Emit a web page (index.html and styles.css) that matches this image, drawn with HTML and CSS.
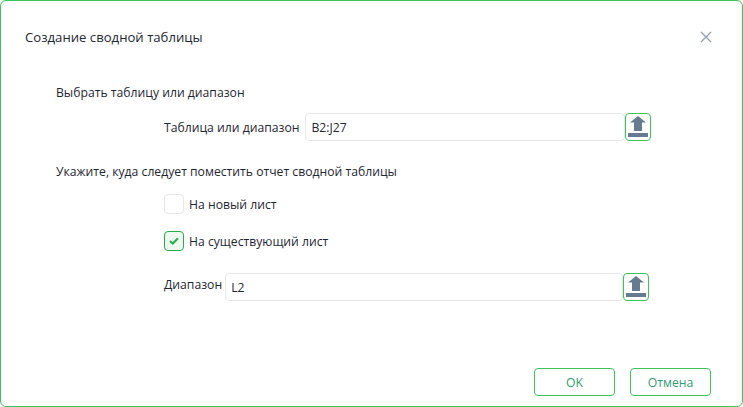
FILE: index.html
```html
<!DOCTYPE html>
<html lang="ru">

<head>
    <meta charset="UTF-8">
    <meta name="viewport" content="width=device-width, initial-scale=1.0">
    <title>Создание сводной таблицы</title>
    <link rel="stylesheet" href="styles.css">
</head>

<body>
    <div class="dialog">
        <header class="dialog-header">
            <h1 class="dialog-title">Создание сводной таблицы</h1>
            <button class="close-btn" aria-label="Закрыть">
                <svg width="12" height="12" viewBox="0 0 12 12">
                    <path d="M1 1L11 11M11 1L1 11" stroke="#8fa1b3" stroke-width="1.3" fill="none" />
                </svg>
            </button>
        </header>

        <main class="dialog-body">
            <p class="section-title">Выбрать таблицу или диапазон</p>
            <div class="field-row source-row">
                <label class="field-label">Таблица или диапазон</label>
                <input class="text-input source-input" type="text" value="B2:J27">
                <button class="pick-btn" aria-label="Выбрать диапазон">
                    <svg width="20" height="22" viewBox="0 0 20 22">
                        <path d="M10 0L18 6.5H14V15H6V6.5H2Z" fill="#667b91" />
                        <rect x="0" y="17" width="20" height="4" fill="#667b91" />
                    </svg>
                </button>
            </div>

            <p class="section-title target-title">Укажите, куда следует поместить отчет сводной таблицы</p>
            <div class="radio-row">
                <span class="check-box"></span>
                <span class="check-label">На новый лист</span>
            </div>
            <div class="radio-row second-radio">
                <span class="check-box checked">
                    <svg width="10" height="8" viewBox="0 0 10 8">
                        <path d="M1 4L3.8 6.5L9 1.2" stroke="#27ae4f" stroke-width="2" fill="none" />
                    </svg>
                </span>
                <span class="check-label">На существующий лист</span>
            </div>
            <div class="field-row range-row">
                <label class="field-label range-label">Диапазон</label>
                <input class="text-input range-input" type="text" value="L2">
                <button class="pick-btn" aria-label="Выбрать диапазон">
                    <svg width="20" height="22" viewBox="0 0 20 22">
                        <path d="M10 0L18 6.5H14V15H6V6.5H2Z" fill="#667b91" />
                        <rect x="0" y="17" width="20" height="4" fill="#667b91" />
                    </svg>
                </button>
            </div>
        </main>

        <footer class="dialog-footer">
            <button class="footer-btn">OK</button>
            <button class="footer-btn">Отмена</button>
        </footer>
    </div>
</body>

</html>
```

FILE: styles.css
```css
* {
    box-sizing: border-box;
}

html,
body {
    height: 100%;
}

body {
    margin: 0;
    background-color: #fff;
    font-family: 'Open Sans', 'Noto Sans', sans-serif;
    font-size: 12.2px;
    color: #1f2733;
    overflow: hidden;
}

.dialog {
    display: flex;
    flex-direction: column;
    height: 407px;
    border: 1px solid #3cc45a;
    border-radius: 6px;
    background-color: #fff;
}

.dialog-header {
    display: flex;
    justify-content: space-between;
    align-items: center;
    height: 72px;
    padding: 0 30px 0 24px;
}

.dialog-title {
    margin: 0;
    font-size: 13.15px;
    font-weight: 400;
}

.close-btn {
    display: flex;
    padding: 0;
    border: none;
    background: none;
}

.dialog-body {
    flex: 1;
    padding: 11px 0 0 55px;
}

.section-title {
    margin: 0;
    height: 18px;
    line-height: 18px;
}

.field-row {
    display: flex;
    align-items: center;
}

.source-row {
    margin: 11px 0 0 108px;
}

.field-label {
    white-space: nowrap;
}

.range-label {
    padding-bottom: 5px;
}

.text-input {
    height: 28px;
    padding: 0 5px;
    border: 1px solid #e6e8eb;
    border-radius: 4px;
    background-color: #fff;
    font-family: inherit;
    font-size: 12.2px;
    color: #1f2733;
}

.source-input {
    width: 320px;
    margin-left: 6px;
}

.range-input {
    width: 398px;
    margin-left: 3px;
}

.pick-btn {
    display: flex;
    align-items: center;
    justify-content: center;
    width: 26px;
    height: 28px;
    padding: 0;
    border: 1px solid #3cc45a;
    border-radius: 4px;
    background-color: #fff;
}

.target-title {
    margin-top: 22px;
}

.radio-row {
    display: flex;
    align-items: center;
    gap: 5px;
    margin: 13px 0 0 108px;
}

.second-radio {
    margin-top: 17px;
}

.check-box {
    display: flex;
    align-items: center;
    justify-content: center;
    width: 20px;
    height: 20px;
    border: 1px solid #e6e8eb;
    border-radius: 4px;
}

.check-box.checked {
    border-color: #2fa84f;
    background-color: #eefaf0;
}

.range-row {
    margin: 22px 0 0 108px;
}

.dialog-footer {
    display: flex;
    justify-content: flex-end;
    gap: 15px;
    padding: 0 31px 10px 0;
}

.footer-btn {
    width: 81px;
    height: 28px;
    padding: 0;
    border: 1px solid #3cc45a;
    border-radius: 4px;
    background-color: #fff;
    font-family: inherit;
    font-size: 12.2px;
    color: #2f9e6e;
}
```
